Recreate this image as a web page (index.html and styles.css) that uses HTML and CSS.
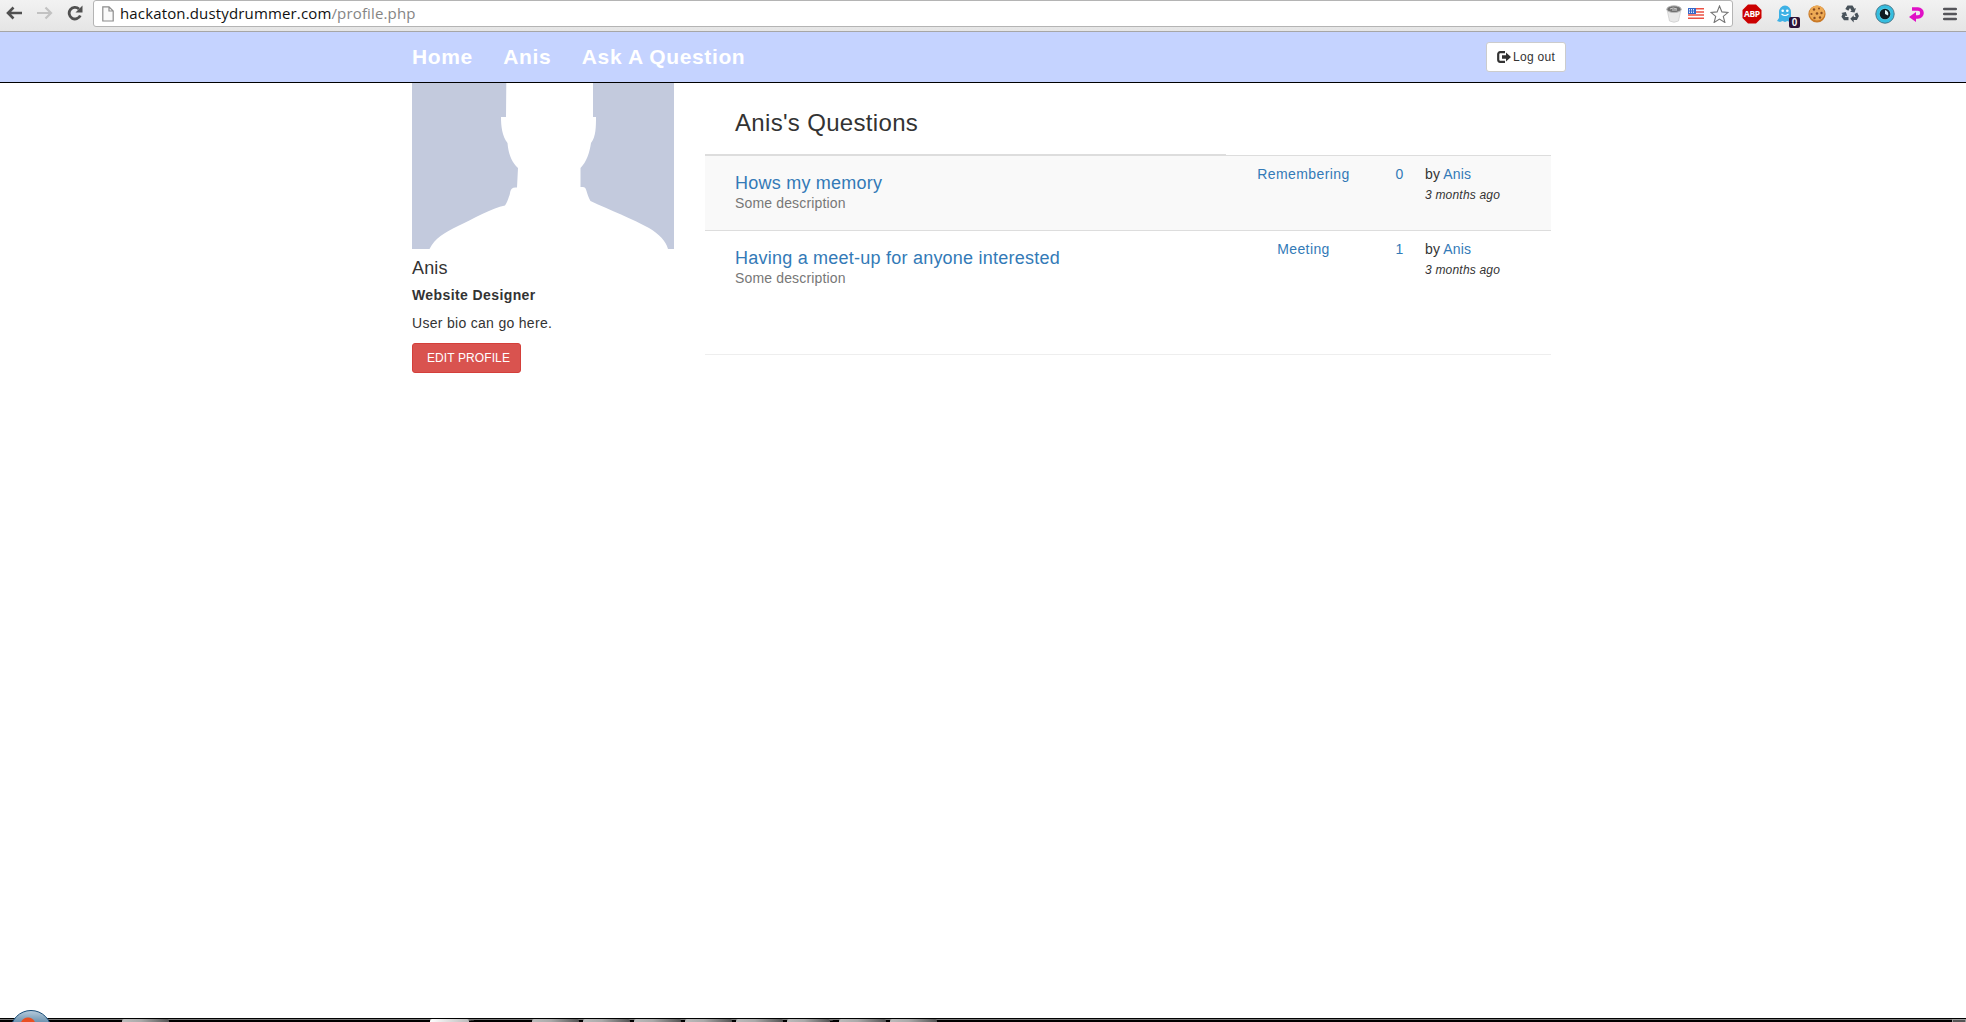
FILE: index.html
```html
<!DOCTYPE html>
<html lang="en">
<head>
    <meta charset="UTF-8">
    <meta name="viewport" content="width=device-width, initial-scale=1.0">
    <title>Anis's Profile</title>
    <link rel="stylesheet" href="styles.css">
</head>
<body>
    <!-- Browser toolbar -->
    <div class="toolbar">
        <div class="nav-buttons">
            <svg class="back" width="18" height="16" viewBox="0 0 18 16"><path d="M8.500 2.500L3 8l5.500 5.500M3 8h14" fill="none" stroke="#505050" stroke-width="2.600"/></svg>
            <svg class="forward" width="18" height="16" viewBox="0 0 18 16"><path d="M9.500 2.500L15 8l-5.500 5.500M15 8H1" fill="none" stroke="#c2c2c2" stroke-width="2.200"/></svg>
            <svg class="reload" width="16" height="16" viewBox="0 0 16 16"><path d="M13.300 10.500A5.800 5.800 0 1 1 12 4" fill="none" stroke="#505050" stroke-width="2.800"/><path d="M15.500 .5v7H8.500z" fill="#505050"/></svg>
        </div>
        <div class="address-bar">
            <svg class="page-icon" width="12" height="16" viewBox="0 0 12 16"><path d="M.8.8h6.200l4.200 4.200v10H.8zM7 .8V5h4.200" fill="#fafafa" stroke="#8c8c8c" stroke-width="1.200"/></svg>
            <span class="url">hackaton.dustydrummer.com<span class="path">/profile.php</span></span>
            <div class="bar-icons">
                <svg width="16" height="18" viewBox="0 0 16 18"><path d="M1 4.500l2.500 11.500q4.500 2.500 9 0L15 4.500z" fill="#e9e9e9" stroke="#c4c4c4" stroke-width=".6"/><ellipse cx="8" cy="4.200" rx="7.200" ry="3.400" fill="#707070" stroke="#bbb"/><path d="M4 4q3-2 7 0M6 5h5" stroke="#ccc" fill="none"/></svg>
                <svg width="16" height="11" viewBox="0 0 16 11"><rect width="16" height="11" fill="#fff"/><path d="M0 .8h16M0 3.900h16M0 7h16M0 10.200h16" stroke="#eb5144" stroke-width="1.500"/><rect width="8" height="6" fill="#3869c9"/><path d="M1 1.500h6M1 3h6M1 4.500h6" stroke="#dfe7fa" stroke-dasharray="1 1"/></svg>
                <svg width="19" height="18" viewBox="0 0 19 18"><path d="M9.500 1l2.400 5.900 6.200.5-4.800 4 1.600 6.100-5.400-3.400-5.400 3.400 1.600-6.100-4.800-4 6.200-.5z" fill="#fff" stroke="#747474" stroke-width="1.100"/></svg>
            </div>
        </div>
        <div class="extensions">
            <svg width="20" height="20" viewBox="0 0 20 20"><path d="M6 .5h8L19.500 6v8L14 19.500H6L.5 14V6z" fill="#cb0000"/><text x="10" y="13.200" class="abp" textLength="16">ABP</text></svg>
            <div class="ghost">
                <svg width="16" height="18" viewBox="0 0 16 18"><path d="M2 7a6 6.500 0 0 1 12 0v6l1.500 3-3 1-2-1-2.500 1-2.500-1-2.500 1-3-1L2 13z" fill="#3eb1e5"/><circle cx="5.700" cy="5.800" r="1.300" fill="#fff"/><circle cx="10.300" cy="5.800" r="1.300" fill="#fff"/><path d="M4.500 9q3.500 3 7 0" stroke="#fff" stroke-width="1.200" fill="none"/></svg>
                <span class="count">0</span>
            </div>
            <svg width="18" height="18" viewBox="0 0 18 18"><circle cx="9" cy="9" r="8.600" fill="#c97926"/><circle cx="9" cy="8" r="7.600" fill="#edaa55"/><g fill="#884b20"><circle cx="6" cy="4.500" r="1.200"/><circle cx="11" cy="3.500" r="1"/><circle cx="3.500" cy="9" r="1.100"/><circle cx="9" cy="8.500" r="1.300"/><circle cx="13.500" cy="8" r="1.200"/><circle cx="6.500" cy="13" r="1.200"/><circle cx="12" cy="12.500" r="1.200"/></g></svg>
            <svg width="18" height="18" viewBox="0 0 18 18"><g fill="#48525a"><path d="M6.500 .5h5l2 3.300 1.500-.8-1.500 4.500-4.500-.8 1.500-1L9 3 7.300 5.800 4.300 4z"/><path d="M13.500 9l2.700-1.500 1.700 3.500-2 4h-3.200v2.500L9.300 13.800l3.400-3.600v1.700h2z"/><path d="M.3 8l4.500-1 1.500 4.200-1.500-.8-1 1.700H7.500v3.200H3L.4 11.800l1.200-2.700z"/></g></svg>
            <svg width="20" height="20" viewBox="0 0 20 20"><circle cx="10" cy="10" r="9.200" fill="#35bddf" stroke="#4b788a"/><circle cx="10" cy="10" r="6" fill="#5cc9e0"/><circle cx="10" cy="10" r="5.300" fill="#101c22"/><path d="M10 6v4l3 1.500A4 4 0 0 0 10 6z" fill="#e3f7fa"/></svg>
            <svg class="redirect" width="18" height="18" viewBox="0 0 18 18"><path d="M4 4h6a4 4 0 0 1 0 8H6" fill="none" stroke="#e010c6" stroke-width="3.600"/><path d="M1 12l7-5v10z" fill="#e010c6"/></svg>
            <svg class="menu-icon" width="14" height="14" viewBox="0 0 14 14"><path d="M1.200 2h11.600M1.200 7h11.600M1.200 12h11.600" stroke="#55555a" stroke-width="2.600" stroke-linecap="round"/></svg>
        </div>
    </div>

    <!-- Site navigation -->
    <header class="navbar">
        <div class="container navbar-inner">
            <nav>
                <a href="index.php">Home</a>
                <a href="profile.php">Anis</a>
                <a href="ask.php">Ask A Question</a>
            </nav>
            <button class="btn btn-logout" type="button">
                <svg width="14" height="12" viewBox="0 0 14 12"><path d="M8 1.200H3.200a2 2 0 0 0-2 2v5.600a2 2 0 0 0 2 2H8" fill="none" stroke="#333" stroke-width="2.200"/><path d="M5 4.200h4V1.500L14 6l-5 4.500V7.800H5z" fill="#333"/></svg>
                <span>Log out</span>
            </button>
        </div>
    </header>

    <main class="container content">
        <!-- Profile column -->
        <aside class="profile">
            <svg class="avatar" viewBox="0 0 262 166"><rect width="262" height="166" fill="#c3cadd"/><path d="M94.300 0L94 34h-5c0 9 1 19 6.500 26 1 11 4 19 10.500 25l-1 19.500c-8-1-6 5-8 9-1 3-2 6-4 9C80 125 61 136 46 143c-14 7-23 12-28.500 23H256c-2-8-9-15-19-21-16-9-39-18-58.500-27-2-3-3-7-4-10-1-4-2-4-6-4V85c6-6 9-15 10.500-25 5-6 5-17 5-26H181V0z" fill="#fff"/></svg>
            <h4 class="name">Anis</h4>
            <p class="job">Website Designer</p>
            <p class="bio">User bio can go here.</p>
            <button class="btn btn-danger" type="button">EDIT PROFILE</button>
        </aside>

        <!-- Questions column -->
        <section class="questions">
            <table>
                <thead>
                    <tr>
                        <th class="col-title"><h3>Anis's Questions</h3></th>
                        <td class="col-category"></td>
                        <td class="col-answers"></td>
                        <td class="col-author"></td>
                    </tr>
                </thead>
                <tbody>
                    <tr class="striped">
                        <td class="question"><h4><a href="#">Hows my memory</a></h4><small>Some description</small></td>
                        <td class="center category"><a href="#">Remembering</a></td>
                        <td class="center"><a href="#">0</a></td>
                        <td class="author">by <a href="#">Anis</a><i class="date">3 months ago</i></td>
                    </tr>
                    <tr>
                        <td class="question"><h4><a href="#">Having a meet-up for anyone interested</a></h4><small>Some description</small></td>
                        <td class="center category"><a href="#">Meeting</a></td>
                        <td class="center"><a href="#">1</a></td>
                        <td class="author">by <a href="#">Anis</a><i class="date">3 months ago</i></td>
                    </tr>
                </tbody>
            </table>
            <hr>
        </section>
    </main>

    <!-- Desktop taskbar -->
    <footer class="taskbar">
        <div class="start"></div>
        <span class="task task-first"></span>
        <span class="task task-active"></span>
        <div class="task-group">
            <span class="task"></span>
            <span class="task"></span>
            <span class="task"></span>
            <span class="task"></span>
            <span class="task"></span>
            <span class="task task-stack"></span>
            <span class="task"></span>
            <span class="task"></span>
        </div>
        <span class="show-desktop"></span>
    </footer>
</body>
</html>
```
FILE: styles.css
```css
/* General styling */
* {
    box-sizing: border-box;
}

body {
    margin: 0;
    height: 100vh;
    display: flex;
    flex-direction: column;
    overflow: hidden;
    background-color: #fff;
    color: #333;
    font-family: Arial, "Liberation Sans", sans-serif;
    font-size: 14px;
    line-height: 20px;
    letter-spacing: 0.15px;
}

a {
    color: #337ab7;
    text-decoration: none;
}

h3, h4, p {
    margin: 0;
    font-weight: normal;
}

svg {
    display: block;
    flex-shrink: 0;
}

.container {
    width: 1172px;
    margin: 0 auto;
    padding: 0 15px;
}

/* Browser toolbar */
.toolbar {
    display: flex;
    flex-shrink: 0;
    height: 32px;
    background: linear-gradient(#f2f2f2, #e5e5e5);
    border-bottom: 1px solid #a6a6a6;
}

.nav-buttons {
    display: flex;
    width: 93px;
    padding: 5px 0 0 5px;
}

.forward {
    margin-left: 13px;
}

.reload {
    margin-left: 13px;
}

.address-bar {
    display: flex;
    align-items: center;
    width: 1640px;
    height: 27px;
    padding: 0 3px 0 8px;
    background-color: #fff;
    border: 1px solid #b4b4b4;
    border-radius: 3px;
}

.url {
    margin: 0 0 2px 6px;
    color: #111;
    font-family: "Open Sans", "Noto Sans", sans-serif;
    font-size: 15px;
    letter-spacing: 0.15px;
}

.url .path {
    color: #858585;
}

.bar-icons {
    display: flex;
    align-items: center;
    gap: 6px;
    margin-left: auto;
}

.extensions {
    display: flex;
    align-items: center;
    justify-content: space-between;
    width: 215px;
    height: 27px;
    margin-left: 9px;
}

.abp {
    fill: #fff;
    font-family: "Open Sans", sans-serif;
    font-size: 8.5px;
    font-weight: bold;
    letter-spacing: 0;
    text-anchor: middle;
}

.ghost {
    position: relative;
}

.count {
    position: absolute;
    left: 12px;
    top: 12px;
    width: 11px;
    height: 11px;
    border-radius: 2px;
    background-color: #2b1238;
    color: #fff;
    font-size: 10px;
    font-weight: bold;
    line-height: 11px;
    text-align: center;
}

.redirect {
    margin: 0 2px 0 -2px;
}

/* Site navigation */
.navbar {
    flex-shrink: 0;
    height: 51px;
    background-color: #c5d3ff;
    border-bottom: 1px solid #000;
}

.navbar-inner {
    display: flex;
    justify-content: space-between;
    padding-right: 3px;
}

.navbar nav {
    display: flex;
    gap: 30.5px;
}

.navbar nav a {
    color: #fff;
    font-size: 21px;
    font-weight: bold;
    line-height: 50px;
    letter-spacing: 0.62px;
}

.btn {
    display: flex;
    align-items: center;
    height: 30px;
    padding: 0 10px;
    border: 1px solid #ccc;
    border-radius: 3px;
    background-color: #fff;
    color: #333;
    font-family: inherit;
    font-size: 12px;
}

.btn-logout {
    gap: 2px;
    width: 80px;
    margin-top: 10px;
    letter-spacing: 0.3px;
    white-space: nowrap;
}

.btn-danger {
    width: 109px;
    margin-top: 10px;
    padding-left: 14px;
    background-color: #d9534f;
    border-color: #d43f3a;
    color: #fff;
    letter-spacing: 0.1px;
    white-space: nowrap;
}

/* Profile column */
.content {
    display: flex;
    flex: 1;
    gap: 31px;
    min-height: 0;
}

.profile {
    width: 262px;
}

.avatar {
    width: 262px;
    height: 166px;
}

.name {
    margin-top: 9px;
    font-size: 18px;
}

.job {
    margin-top: 7px;
    font-weight: bold;
    letter-spacing: 0.4px;
}

.bio {
    margin-top: 8px;
    letter-spacing: 0.3px;
}

/* Questions table */
.questions {
    width: 846px;
}

table {
    width: 846px;
    table-layout: fixed;
    border-collapse: separate;
    border-spacing: 0;
}

th, td {
    padding: 8px;
    text-align: left;
    vertical-align: top;
}

thead th, thead td {
    height: 73px;
    border-bottom: 1px solid #ddd;
}

thead th {
    padding: 27px 30px 0;
    border-bottom-width: 2px;
}

h3 {
    font-size: 24px;
    line-height: 26px;
    letter-spacing: 0.32px;
}

.col-title {
    width: 521px;
}

.col-category {
    width: 155px;
}

.col-answers {
    width: 37px;
}

tbody td {
    height: 75px;
    border-bottom: 1px solid #ddd;
}

tbody tr:last-child td {
    border-bottom: none;
}

.striped {
    background-color: #f9f9f9;
}

.question {
    padding: 17px 30px 0;
}

.question h4 {
    font-size: 18px;
    line-height: 20px;
    letter-spacing: 0.23px;
}

.question small {
    display: block;
    color: #777;
    font-size: 14px;
}

.center {
    text-align: center;
}

.category {
    letter-spacing: 0.4px;
}

.author {
    padding-left: 7px;
}

.date {
    display: block;
    padding-top: 1px;
    font-size: 12px;
    letter-spacing: 0.2px;
}

hr {
    margin: 48px 0 0;
    border: none;
    border-top: 1px solid #eee;
}

/* Desktop taskbar */
.taskbar {
    position: relative;
    display: flex;
    align-items: flex-end;
    flex-shrink: 0;
    height: 4px;
    background: linear-gradient(#000 1px, #777 1px, #777 2px, #000 2px);
}

.start {
    position: absolute;
    left: 10px;
    top: -8px;
    width: 42px;
    height: 42px;
    border: 1px solid #164b76;
    border-radius: 50%;
    background: radial-gradient(circle at 17px 14px, #e94f21 0, #e94f21 7px, transparent 8px), linear-gradient(#b5cadb, #668eac 12px);
}

.task {
    width: 47px;
    height: 3px;
    border-radius: 2px 2px 0 0;
    background: linear-gradient(90deg, #bbb, #aaa 40%, #555);
}

.task-first {
    margin-left: 122px;
}

.task-active {
    width: 39px;
    margin-left: 261px;
    background: linear-gradient(90deg, #fff, #bbb);
    box-shadow: 3px 0 0 -1px #555, 6px 0 0 -1px #333;
}

.task-group {
    display: flex;
    gap: 4px;
    margin-left: 63px;
}

.task-stack {
    width: 43px;
    margin-right: 5px;
    box-shadow: 4px 0 0 -1px #444;
}

.show-desktop {
    width: 14px;
    height: 3px;
    margin-left: auto;
    border: 1px solid #999;
    border-bottom: none;
    background-color: #555;
}
```
